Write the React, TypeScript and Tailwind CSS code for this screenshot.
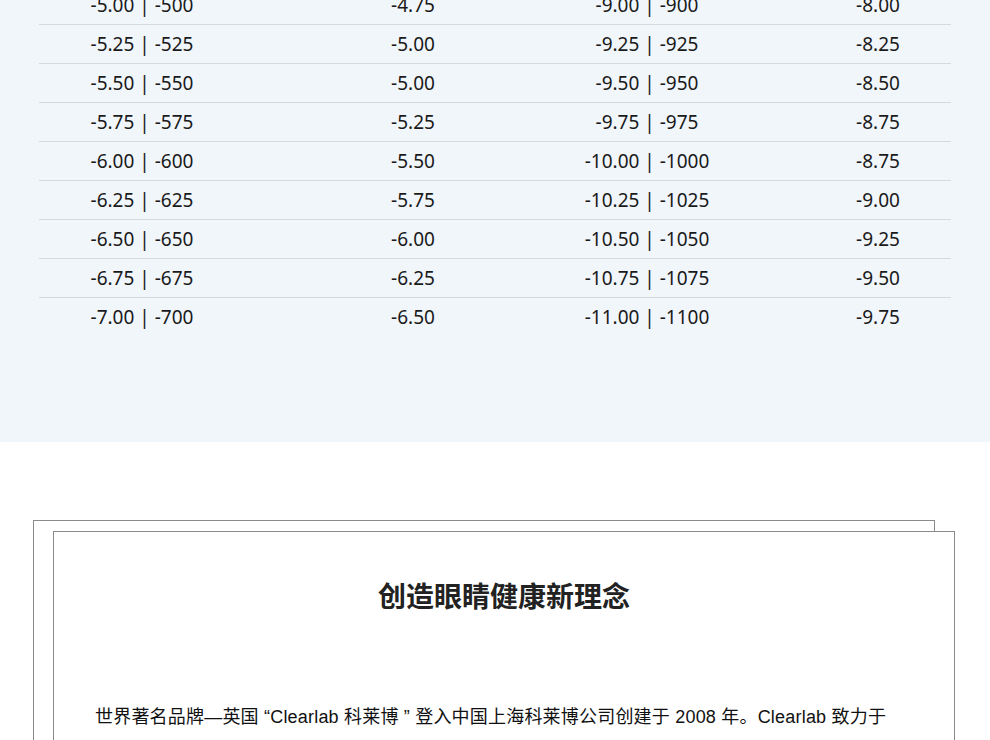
const rows = [
  ["-5.00 | -500", "-4.75", "-9.00 | -900", "-8.00"],
  ["-5.25 | -525", "-5.00", "-9.25 | -925", "-8.25"],
  ["-5.50 | -550", "-5.00", "-9.50 | -950", "-8.50"],
  ["-5.75 | -575", "-5.25", "-9.75 | -975", "-8.75"],
  ["-6.00 | -600", "-5.50", "-10.00 | -1000", "-8.75"],
  ["-6.25 | -625", "-5.75", "-10.25 | -1025", "-9.00"],
  ["-6.50 | -650", "-6.00", "-10.50 | -1050", "-9.25"],
  ["-6.75 | -675", "-6.25", "-10.75 | -1075", "-9.50"],
  ["-7.00 | -700", "-6.50", "-11.00 | -1100", "-9.75"],
];

export default function App() {
  return (
    <div className="w-[990px] h-[740px] overflow-hidden bg-white" style={{ fontFamily: '"Noto Sans", "Noto Sans CJK SC", sans-serif' }}>
      {/* Table */}
      <div className="bg-[#f1f6fb] h-[442px] pt-px">
        <div className="ml-[39px] w-[912px] -mt-[15px]">
          {rows.map((r, i) => (
            <div key={i} className={`grid grid-cols-[206px_336px_132px_238px] h-[39px] items-center text-[19px] text-[#1a1a1a] ${i < rows.length - 1 ? "border-b border-[#d6d9dd]" : ""}`}>
              <div className="text-center">{r[0]}</div>
              <div className="text-center">{r[1]}</div>
              <div className="text-center whitespace-nowrap">{r[2]}</div>
              <div className="text-center pl-[92px]">{r[3]}</div>
            </div>
          ))}
        </div>
      </div>

      {/* Frame */}
      <div className="relative mt-[78px] ml-[33px] w-[902px] h-[260px]">
        <div className="absolute inset-0 border border-[#8a8a8a]" />
        <div className="absolute left-[20px] top-[11px] w-[902px] h-[260px] border border-[#8a8a8a] bg-white">
          <div className="pt-[42px] text-center text-[28px] font-bold text-[#222]" style={{ fontFamily: '"Noto Sans CJK SC", sans-serif' }}>
            创造眼睛健康新理念
          </div>
          <p className="mt-[88px] pl-[41px] text-[18px] tracking-[0.2px] text-[#111] whitespace-nowrap" style={{ fontFamily: '"Liberation Sans", "Noto Sans CJK SC", sans-serif' }}>
            世界著名品牌—英国 “Clearlab 科莱博 ” 登入中国上海科莱博公司创建于 2008 年。Clearlab 致力于
          </p>
        </div>
      </div>
    </div>
  );
}
